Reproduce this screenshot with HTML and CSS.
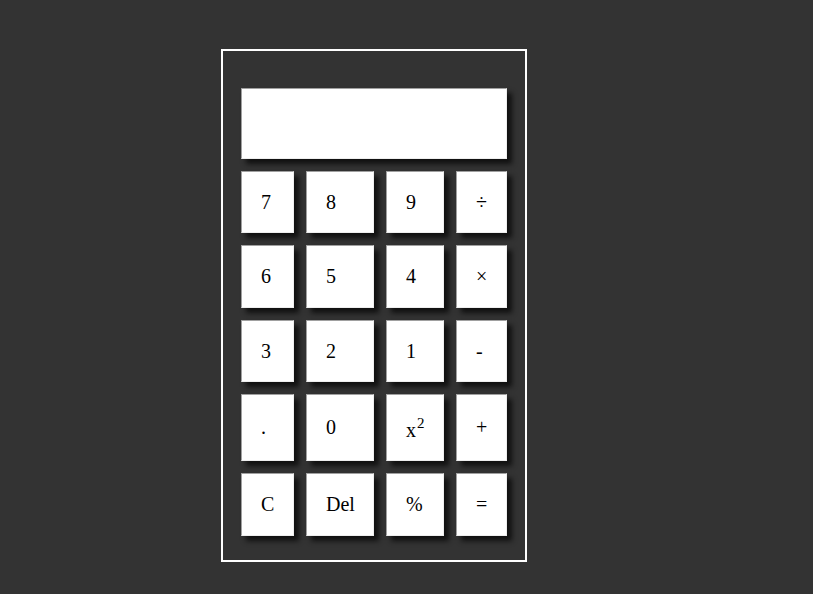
FILE: index.html
```html
<!DOCTYPE html>
<html>
<head>
<meta charset="utf-8">
<link rel="stylesheet" href="styles.css">
<title>Calculator</title>
</head>
<body>
<div class="calc">
  <div class="pad">
    <div class="screen"></div>
    <div class="key">7</div>
    <div class="key">8</div>
    <div class="key">9</div>
    <div class="key">÷</div>
    <div class="key">6</div>
    <div class="key">5</div>
    <div class="key">4</div>
    <div class="key">×</div>
    <div class="key">3</div>
    <div class="key">2</div>
    <div class="key">1</div>
    <div class="key">-</div>
    <div class="key">.</div>
    <div class="key">0</div>
    <div class="key key-pow"><span>x<sup>2</sup></span></div>
    <div class="key">+</div>
    <div class="key">C</div>
    <div class="key">Del</div>
    <div class="key">%</div>
    <div class="key">=</div>
  </div>
</div>
</body>
</html>
```
FILE: styles.css
```css
html, body {
  margin: 0;
  padding: 0;
  background: #333333;
}
body {
  padding: 49px 0 0 221px;
  font-family: "Liberation Serif", "Times New Roman", serif;
  font-size: 20px;
  color: #000;
}
.calc {
  width: 266px;
  border: 2px solid #ffffff;
  padding: 37px 18px 24px 18px;
}
.pad {
  display: grid;
  grid-template-columns: 53px 68px 58px 51px;
  grid-template-rows: 71px 62px 63px 62px 67px 63px;
  gap: 12px;
}
.screen, .key {
  background: #ffffff;
  box-sizing: border-box;
  border-top: 1px solid #a0a0a0;
  border-left: 1px solid #a0a0a0;
  border-right: 1px solid #eeeeee;
  border-bottom: 1px solid #eeeeee;
  box-shadow: 5px 5px 5px #111111;
}
.screen {
  grid-column: 1 / span 4;
}
.key {
  display: flex;
  align-items: center;
  padding-left: 19px;
  line-height: 23px;
}
.key-pow {
  padding-top: 6px;
}
.key-pow sup {
  font-size: 15px;
  line-height: 0;
  vertical-align: 9px;
  margin-left: 1px;
}
```
